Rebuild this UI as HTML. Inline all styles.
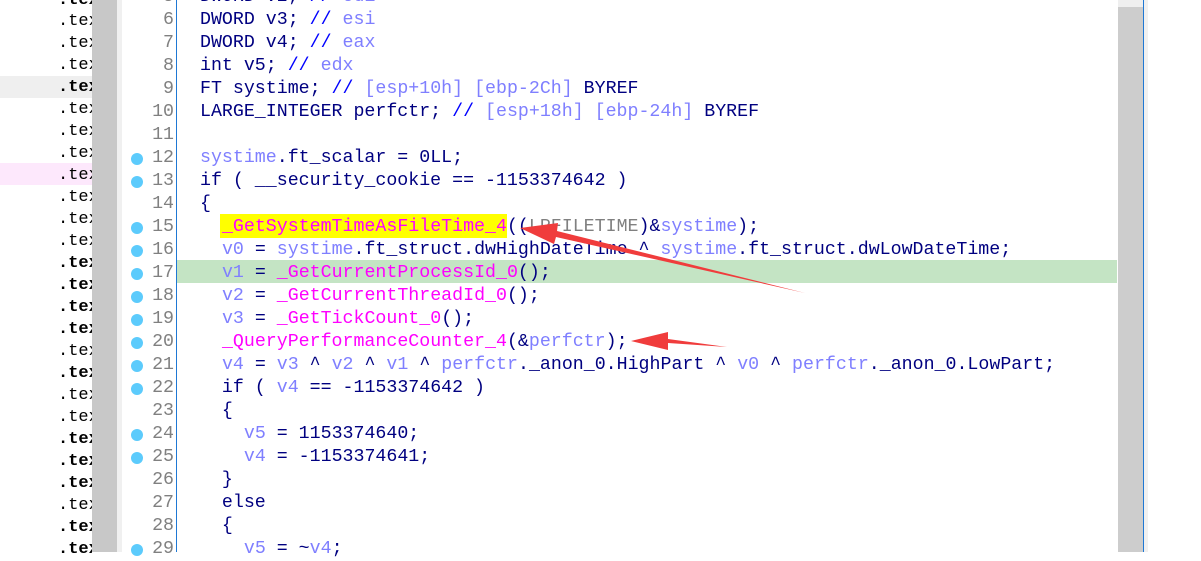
<!DOCTYPE html>
<html><head><meta charset="utf-8"><style>
body{margin:0;width:1201px;height:552px;overflow:hidden;background:#fff;position:relative;font-family:"Liberation Mono",monospace}
.l{position:absolute;left:0;height:22px;width:92px;font-size:17px;line-height:22px;color:#000;overflow:hidden}
.l span{position:absolute;left:58px}
.b{font-weight:bold}
.c{position:absolute;left:200px;font-size:18.27px;line-height:23px;height:23px;white-space:pre;color:#000080}
.n{position:absolute;left:140px;width:34px;text-align:right;font-size:18.27px;line-height:23px;color:#808080;white-space:pre}
.d{position:absolute;left:131px;width:12px;height:12px;border-radius:50%;background:#5ccbfc}
.v{color:#7f7fff}.f{color:#ff00ff}.k{color:#0000ff}.g{color:#808080}
#code{position:absolute;left:0;top:3px;width:1201px;height:552px}
</style></head><body>
<div style="position:absolute;left:0;top:76px;width:92px;height:22px;background:#efefef"></div>
<div style="position:absolute;left:0;top:163px;width:92px;height:22px;background:#fde8fc"></div>
<div class="l" style="top:-10px"><span class="b">.tex</span></div>
<div class="l" style="top:11px"><span>.tex</span></div>
<div class="l" style="top:33px"><span>.tex</span></div>
<div class="l" style="top:55px"><span>.tex</span></div>
<div class="l" style="top:77px"><span class="b">.tex</span></div>
<div class="l" style="top:99px"><span>.tex</span></div>
<div class="l" style="top:121px"><span>.tex</span></div>
<div class="l" style="top:143px"><span>.tex</span></div>
<div class="l" style="top:165px"><span>.tex</span></div>
<div class="l" style="top:187px"><span>.tex</span></div>
<div class="l" style="top:209px"><span>.tex</span></div>
<div class="l" style="top:231px"><span>.tex</span></div>
<div class="l" style="top:253px"><span class="b">.tex</span></div>
<div class="l" style="top:275px"><span class="b">.tex</span></div>
<div class="l" style="top:297px"><span class="b">.tex</span></div>
<div class="l" style="top:319px"><span class="b">.tex</span></div>
<div class="l" style="top:341px"><span>.tex</span></div>
<div class="l" style="top:363px"><span class="b">.tex</span></div>
<div class="l" style="top:385px"><span>.tex</span></div>
<div class="l" style="top:407px"><span>.tex</span></div>
<div class="l" style="top:429px"><span class="b">.tex</span></div>
<div class="l" style="top:451px"><span class="b">.tex</span></div>
<div class="l" style="top:473px"><span class="b">.tex</span></div>
<div class="l" style="top:495px"><span>.tex</span></div>
<div class="l" style="top:517px"><span class="b">.tex</span></div>
<div class="l" style="top:539px"><span class="b">.tex</span></div>
<div style="position:absolute;left:92px;top:0;width:25px;height:552px;background:#c8c8c8"></div>
<div style="position:absolute;left:117px;top:0;width:5px;height:552px;background:#f0f0f0"></div>
<div style="position:absolute;left:176px;top:0;width:1px;height:552px;background:#1f78d4"></div>
<div style="position:absolute;left:1118px;top:0;width:25px;height:552px;background:#cdcdcd"></div>
<div style="position:absolute;left:1118px;top:0;width:25px;height:7px;background:#efefef"></div>
<div style="position:absolute;left:1143px;top:0;width:1px;height:552px;background:#1f78d4"></div>
<div style="position:absolute;left:1144px;top:0;width:4px;height:552px;background:#f0f0f0"></div>
<div style="position:absolute;left:177px;top:260px;width:940px;height:23px;background:#c4e4c4"></div>
<div style="position:absolute;left:220px;top:214px;width:287px;height:24px;background:#ffff00"></div>
<div id="code">
<div class="n" style="top:-17px"> 5</div><div class="c" style="top:-17px">DWORD v2; <span class="k">//</span> <span class="v">edi</span></div>
<div class="n" style="top:6px"> 6</div><div class="c" style="top:6px">DWORD v3; <span class="k">//</span> <span class="v">esi</span></div>
<div class="n" style="top:29px"> 7</div><div class="c" style="top:29px">DWORD v4; <span class="k">//</span> <span class="v">eax</span></div>
<div class="n" style="top:52px"> 8</div><div class="c" style="top:52px">int v5; <span class="k">//</span> <span class="v">edx</span></div>
<div class="n" style="top:75px"> 9</div><div class="c" style="top:75px">FT systime; <span class="k">//</span> <span class="v">[esp+10h] [ebp-2Ch]</span> BYREF</div>
<div class="n" style="top:98px">10</div><div class="c" style="top:98px">LARGE_INTEGER perfctr; <span class="k">//</span> <span class="v">[esp+18h] [ebp-24h]</span> BYREF</div>
<div class="n" style="top:121px">11</div>
<div class="d" style="top:150px"></div><div class="n" style="top:144px">12</div><div class="c" style="top:144px"><span class="v">systime</span>.ft_scalar = 0LL;</div>
<div class="d" style="top:173px"></div><div class="n" style="top:167px">13</div><div class="c" style="top:167px">if ( __security_cookie == -1153374642 )</div>
<div class="n" style="top:190px">14</div><div class="c" style="top:190px">{</div>
<div class="d" style="top:219px"></div><div class="n" style="top:213px">15</div><div class="c" style="top:213px">  <span class="f">_GetSystemTimeAsFileTime_4</span>((<span class="g">LPFILETIME</span>)&amp;<span class="v">systime</span>);</div>
<div class="d" style="top:242px"></div><div class="n" style="top:236px">16</div><div class="c" style="top:236px">  <span class="v">v0</span> = <span class="v">systime</span>.ft_struct.dwHighDateTime ^ <span class="v">systime</span>.ft_struct.dwLowDateTime;</div>
<div class="d" style="top:265px"></div><div class="n" style="top:259px">17</div><div class="c" style="top:259px">  <span class="v">v1</span> = <span class="f">_GetCurrentProcessId_0</span>();</div>
<div class="d" style="top:288px"></div><div class="n" style="top:282px">18</div><div class="c" style="top:282px">  <span class="v">v2</span> = <span class="f">_GetCurrentThreadId_0</span>();</div>
<div class="d" style="top:311px"></div><div class="n" style="top:305px">19</div><div class="c" style="top:305px">  <span class="v">v3</span> = <span class="f">_GetTickCount_0</span>();</div>
<div class="d" style="top:334px"></div><div class="n" style="top:328px">20</div><div class="c" style="top:328px">  <span class="f">_QueryPerformanceCounter_4</span>(&amp;<span class="v">perfctr</span>);</div>
<div class="d" style="top:357px"></div><div class="n" style="top:351px">21</div><div class="c" style="top:351px">  <span class="v">v4</span> = <span class="v">v3</span> ^ <span class="v">v2</span> ^ <span class="v">v1</span> ^ <span class="v">perfctr</span>._anon_0.HighPart ^ <span class="v">v0</span> ^ <span class="v">perfctr</span>._anon_0.LowPart;</div>
<div class="d" style="top:380px"></div><div class="n" style="top:374px">22</div><div class="c" style="top:374px">  if ( <span class="v">v4</span> == -1153374642 )</div>
<div class="n" style="top:397px">23</div><div class="c" style="top:397px">  {</div>
<div class="d" style="top:426px"></div><div class="n" style="top:420px">24</div><div class="c" style="top:420px">    <span class="v">v5</span> = 1153374640;</div>
<div class="d" style="top:449px"></div><div class="n" style="top:443px">25</div><div class="c" style="top:443px">    <span class="v">v4</span> = -1153374641;</div>
<div class="n" style="top:466px">26</div><div class="c" style="top:466px">  }</div>
<div class="n" style="top:489px">27</div><div class="c" style="top:489px">  else</div>
<div class="n" style="top:512px">28</div><div class="c" style="top:512px">  {</div>
<div class="d" style="top:541px"></div><div class="n" style="top:535px">29</div><div class="c" style="top:535px">    <span class="v">v5</span> = ~<span class="v">v4</span>;</div>
</div>
<svg style="position:absolute;left:0;top:0" width="1201" height="552">
<polygon points="805,293 556,237 554,244 520,228 558,223 557,231" fill="#f03c3c"/>
<polygon points="727,347 668,343 668,350 631,341 668,332 668,339" fill="#f03c3c"/>
</svg>
</body></html>
